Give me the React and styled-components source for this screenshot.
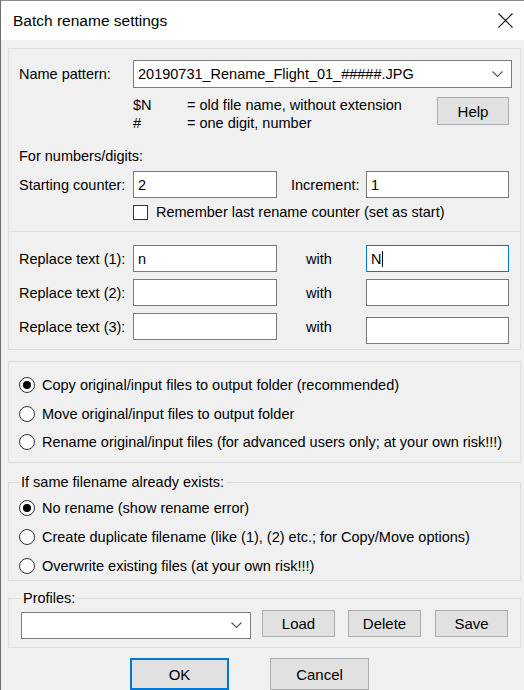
import React from 'react'
import styled, { createGlobalStyle } from 'styled-components'

const GlobalStyle = createGlobalStyle`
  html, body {
    margin: 0;
    padding: 0;
    background: #f0f0f0;
  }
  body {
    font-family: "Liberation Sans", Arial, sans-serif;
    font-size: 14.5px;
    color: #000;
  }
`

const Window = styled.div`
  width: 524px;
  height: 690px;
  box-sizing: border-box;
  border-left: 1px solid #6e6e6e;
  border-top: 1px solid #8a8a8a;
  background: #f0f0f0;
  overflow: hidden;
`

const TitleBar = styled.div`
  height: 39px;
  background: #fff;
  display: flex;
  align-items: center;
  justify-content: space-between;
  padding: 0 10px 0 12px;
  font-size: 15.5px;
`

const CloseIcon = styled.svg`
  width: 15px;
  height: 15px;
  margin-right: 1px;
`

const Body = styled.div`
  padding: 8px 3px 0 7px;
`

const Panel = styled.div`
  border: 1px solid #dcdcdc;
  margin-bottom: ${p => p.$gap || 0}px;
`

const Section = styled.div`
  padding: ${p => p.$pad};
  border-top: ${p => (p.$divider ? '1px solid #dcdcdc' : 'none')};
`

const Row = styled.div`
  display: grid;
  grid-template-columns: 114px 144px 89px 143px;
  align-items: center;
  margin-top: ${p => p.$top || 0}px;
`

const Label = styled.span`
  white-space: nowrap;
  padding-left: ${p => p.$indent || 0}px;
`

const TextBox = styled.div`
  box-sizing: border-box;
  height: ${p => p.$h || 27}px;
  border: 1px solid ${p => (p.$focus ? '#0078d7' : '#7a7a7a')};
  background: #fff;
  padding: 0 4px;
  display: flex;
  align-items: center;
  margin: ${p => p.$shift || 0}px 0 ${p => -(p.$shift || 0)}px;
`

const Caret = styled.span`
  display: inline-block;
  width: 1px;
  height: 16px;
  background: #000;
  margin-left: 1px;
`

const PatternRow = styled.div`
  display: grid;
  grid-template-columns: 114px 1fr;
  align-items: center;
  margin-right: -3px;
`

const Combo = styled(TextBox)`
  justify-content: space-between;
  padding-right: 8px;
  width: ${p => (p.$w ? `${p.$w}px` : 'auto')};
`

const Chevron = styled.svg`
  width: 11px;
  height: 7px;
  flex-shrink: 0;
`

const HintRow = styled.div`
  display: flex;
  align-items: flex-start;
  margin-top: 8px;
  padding-left: 114px;
`

const HintGrid = styled.div`
  display: grid;
  grid-template-columns: 54px auto;
  line-height: 18px;
  flex: 1;
`

const Button = styled.button`
  box-sizing: border-box;
  width: ${p => p.$w || 73}px;
  height: ${p => p.$h || 27}px;
  background: #e1e1e1;
  border: ${p => (p.$default ? '2px solid #0078d7' : '1px solid #adadad')};
  font-family: inherit;
  font-size: 15px;
  color: #000;
  padding: 0;
  margin: ${p => p.$m || 0};
`

const Plain = styled.div`
  line-height: 18px;
  margin-top: ${p => p.$top || 0}px;
`

const CheckRow = styled.div`
  display: flex;
  align-items: center;
  gap: 8px;
  padding-left: 114px;
  margin-top: 5px;
  line-height: 18px;
`

const CheckBox = styled.span`
  box-sizing: border-box;
  width: 15px;
  height: 15px;
  border: 1px solid #333;
  background: #fff;
`

const RadioList = styled.div`
  padding: ${p => p.$pad};
`

const RadioItem = styled.div`
  display: flex;
  align-items: center;
  gap: 7px;
  height: ${p => p.$h}px;
  white-space: nowrap;
`

const RadioDot = styled.span`
  box-sizing: border-box;
  width: 16px;
  height: 16px;
  border-radius: 50%;
  border: 1px solid #333;
  background: #fff;
  display: flex;
  align-items: center;
  justify-content: center;
  &::after {
    content: '';
    width: 8px;
    height: 8px;
    border-radius: 50%;
    background: ${p => (p.$on ? '#000' : 'transparent')};
  }
`

const Group = styled.fieldset`
  margin: 0 0 ${p => p.$gap || 0}px;
  padding: ${p => p.$pad};
  border: 1px solid #dcdcdc;
  min-width: 0;
`

const Legend = styled.legend`
  padding: 0 2px;
  margin-left: 0;
  line-height: 18px;
`

const ProfileRow = styled.div`
  display: flex;
  align-items: flex-start;
`

const Footer = styled.div`
  display: flex;
  padding: 10px 0 0 122px;
  gap: 41px;
`

const ChevronIcon = () => (
  <Chevron viewBox="0 0 11 7">
    <polyline points="0.5,0.5 5.5,5.5 10.5,0.5" fill="none" stroke="#555" strokeWidth="1.1" />
  </Chevron>
)

const Radio = ({ on, h, children }) => (
  <RadioItem $h={h}>
    <RadioDot $on={on} />
    {children}
  </RadioItem>
)

const App = () => (
  <Window>
    <GlobalStyle />
    <TitleBar>
      <span>Batch rename settings</span>
      <CloseIcon viewBox="0 0 15 15">
        <path d="M0.5 0.5 L14.5 14.5 M14.5 0.5 L0.5 14.5" stroke="#111" strokeWidth="1.1" />
      </CloseIcon>
    </TitleBar>

    <Body>
      <Panel $gap={11}>
        <Section $pad="11px 11px 10px 10px">
          <PatternRow>
            <Label>Name pattern:</Label>
            <Combo $h={28}>
              <span>20190731_Rename_Flight_01_#####.JPG</span>
              <ChevronIcon />
            </Combo>
          </PatternRow>
          <HintRow>
            <HintGrid>
              <span>$N</span>
              <span>= old file name, without extension</span>
              <span>#</span>
              <span>= one digit, number</span>
            </HintGrid>
            <Button $w={72} $h={28} $m="1px 0 0 0">Help</Button>
          </HintRow>
          <Plain $top={15}>For numbers/digits:</Plain>
          <Row $top={6}>
            <Label>Starting counter:</Label>
            <TextBox>2</TextBox>
            <Label $indent={14}>Increment:</Label>
            <TextBox>1</TextBox>
          </Row>
          <CheckRow>
            <CheckBox />
            <span>Remember last rename counter (set as start)</span>
          </CheckRow>
        </Section>

        <Section $divider $pad="13px 11px 9px 10px">
          <Row>
            <Label>Replace text (1):</Label>
            <TextBox>n</TextBox>
            <Label $indent={29}>with</Label>
            <TextBox $focus>N<Caret /></TextBox>
          </Row>
          <Row $top={7}>
            <Label>Replace text (2):</Label>
            <TextBox />
            <Label $indent={29}>with</Label>
            <TextBox />
          </Row>
          <Row $top={7}>
            <Label>Replace text (3):</Label>
            <TextBox />
            <Label $indent={29}>with</Label>
            <TextBox $shift={4} />
          </Row>
        </Section>
      </Panel>

      <Panel $gap={10}>
        <RadioList $pad="9px 10px 6px">
          <Radio on h={28}>Copy original/input files to output folder (recommended)</Radio>
          <Radio h={29}>Move original/input files to output folder</Radio>
          <Radio h={28}>Rename original/input files (for advanced users only; at your own risk!!!)</Radio>
        </RadioList>
      </Panel>

      <Group $gap={8} $pad="2px 10px 0">
        <Legend>If same filename already exists:</Legend>
        <Radio on h={29}>No rename (show rename error)</Radio>
        <Radio h={29}>Create duplicate filename (like (1), (2) etc.; for Copy/Move options)</Radio>
        <Radio h={29}>Overwrite existing files (at your own risk!!!)</Radio>
      </Group>

      <Group $pad="3px 10px 8px 12px">
        <Legend>Profiles:</Legend>
        <ProfileRow>
          <Combo $w={230} $h={27} style={{ marginTop: 2 }}>
            <span />
            <ChevronIcon />
          </Combo>
          <Button $m="0 0 0 11px">Load</Button>
          <Button $m="0 0 0 13px">Delete</Button>
          <Button $m="0 0 0 14px">Save</Button>
        </ProfileRow>
      </Group>

      <Footer>
        <Button $default $w={99} $h={32}>OK</Button>
        <Button $w={99} $h={32}>Cancel</Button>
      </Footer>
    </Body>
  </Window>
)

export default App
